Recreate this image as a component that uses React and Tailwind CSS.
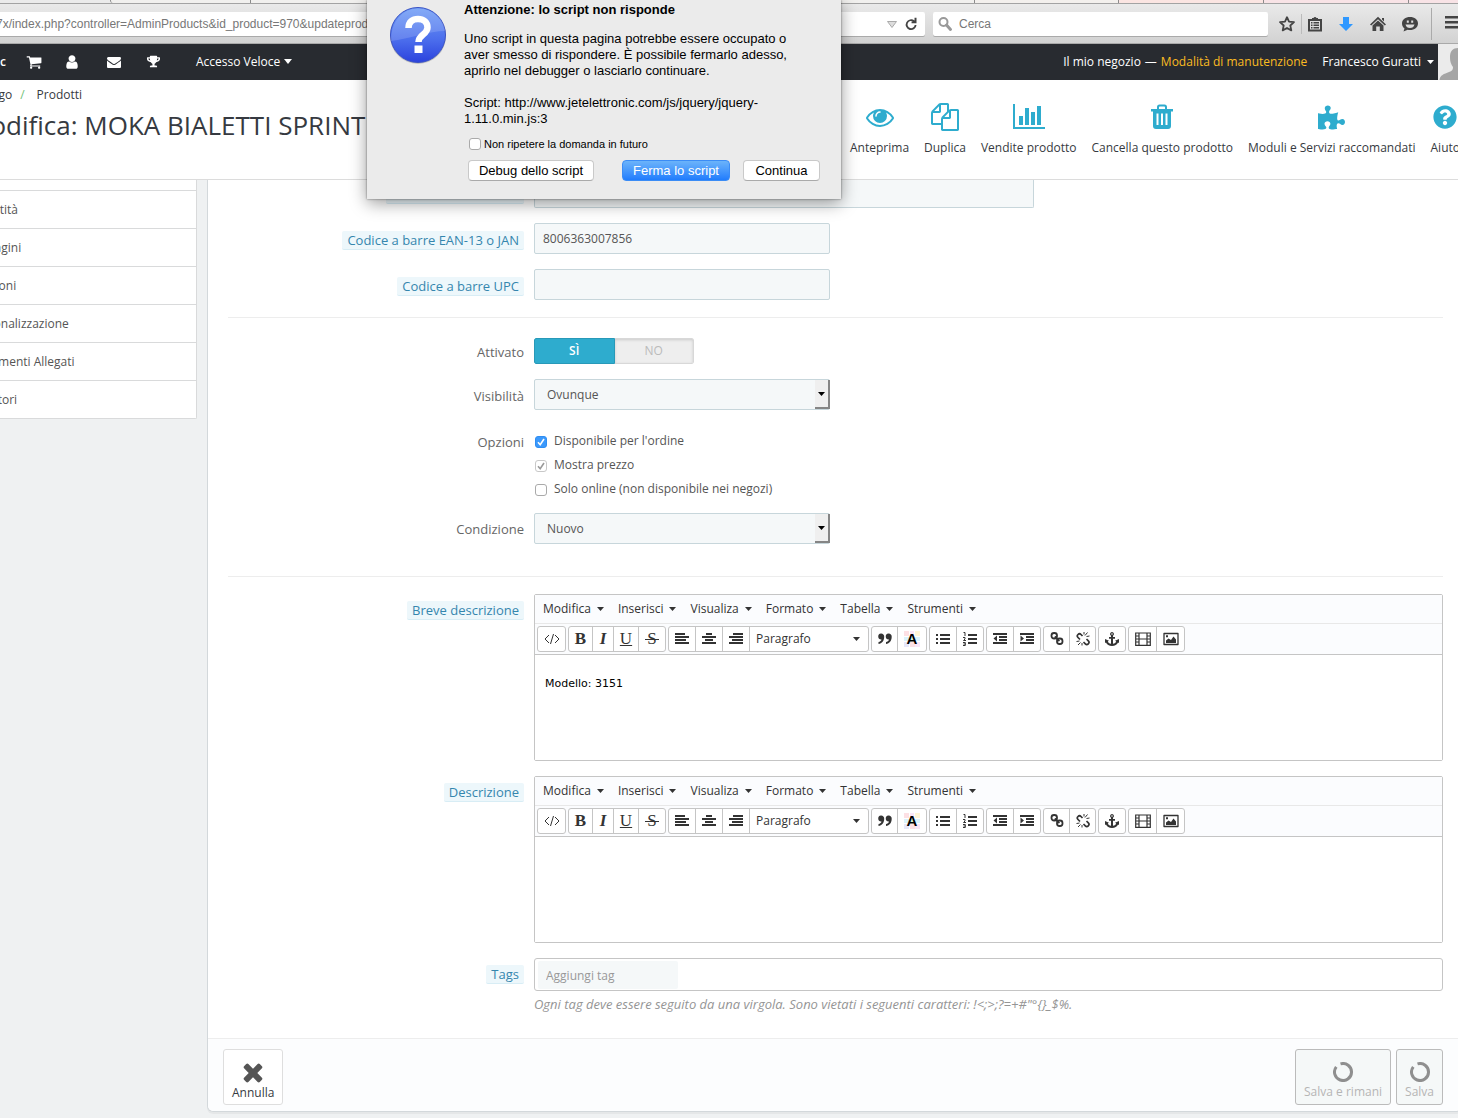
import React from "react";
import { FaTrophy, FaPuzzlePiece, FaQuestionCircle } from "react-icons/fa";

const Glyph = ({ d, box = "0 0 1792 1792", className = "" }) => (
  <svg viewBox={box} className={className} fill="currentColor" aria-hidden="true">
    <path d={d} />
  </svg>
);

const glyphs = {
  cart: "M704 1536q0 52-38 90t-90 38-90-38-38-90 38-90 90-38 90 38 38 90zm896 0q0 52-38 90t-90 38-90-38-38-90 38-90 90-38 90 38 38 90zm128-1088v512q0 24-16.5 42.5t-40.5 21.5l-1044 122q13 60 13 70 0 16-24 64h920q26 0 45 19t19 45-19 45-45 19h-1024q-26 0-45-19t-19-45q0-11 8-31.5t16-36 21.5-40 15.5-29.5l-177-823h-204q-26 0-45-19t-19-45 19-45 45-19h256q16 0 28.5 6.5t19.5 15.5 13 24.5 8 26 5.5 29.5 4.5 26h1201q26 0 45 19t19 45z",
  user: "M1536 1399q0 109-62.5 187t-150.5 78h-854q-88 0-150.5-78t-62.5-187q0-85 8.5-160.5t31.5-152 58.5-131 94-89 134.5-34.5q131 128 313 128t313-128q76 0 134.5 34.5t94 89 58.5 131 31.5 152 8.5 160.5zm-256-887q0 159-112.5 271.5t-271.5 112.5-271.5-112.5-112.5-271.5 112.5-271.5 271.5-112.5 271.5 112.5 112.5 271.5z",
  mail: "M1792 710v794q0 66-47 113t-113 47h-1472q-66 0-113-47t-47-113v-794q44 49 101 87 362 246 497 345 57 42 92.5 65.5t94.500 48 110 24.500h2q51 0 110-24.500t94.500-48 92.500-65.500q170-123 498-345 57-39 100-87zm0-294q0 79-49 151t-122 123q-376 261-468 325-10 7-42.500 30.500t-54 38-52 32.500-57.500 27-50 9h-2q-23 0-50-9t-57.500-27-52-32.500-54-38-42.500-30.500q-91-64-262-182.500t-205-142.500q-62-42-117-115.500t-55-136.500q0-78 41.500-130t118.500-52h1472q65 0 112.500 47t47.500 113z",
  eye: "M1664 960q-152-236-381-353 61 104 61 225 0 185-131.5 316.5t-316.5 131.5-316.5-131.5-131.5-316.5q0-121 61-225-229 117-381 353 133 205 333.5 326.5t434.5 121.5 434.5-121.5 333.5-326.5zm-720-384q0-20-14-34t-34-14q-125 0-214.5 89.5t-89.5 214.5q0 20 14 34t34 14 34-14 14-34q0-86 61-147t147-61q20 0 34-14t14-34zm848 384q0 34-20 69-140 230-376.5 368.5t-499.5 138.5-499.5-139-376.5-368q-20-35-20-69t20-69q140-229 376.5-368t499.5-139 499.5 139 376.5 368q20 35 20 69z",
  copy: "M1696 384q40 0 68 28t28 68v1216q0 40-28 68t-68 28h-960q-40 0-68-28t-28-68v-288h-544q-40 0-68-28t-28-68v-672q0-40 20-88t48-76l408-408q28-28 76-48t88-20h416q40 0 68 28t28 68v328q68-40 128-40h416zm-544 213l-299 299h299v-299zm-640-384l-299 299h299v-299zm196 647l316-316v-416h-384v416q0 40-28 68t-68 28h-416v640h512v-256q0-40 20-88t48-76zm956 804v-1152h-384v416q0 40-28 68t-68 28h-416v640h896z",
  times: "M1490 1322q0 40-28 68l-136 136q-28 28-68 28t-68-28l-294-294-294 294q-28 28-68 28t-68-28l-136-136q-28-28-28-68t28-68l294-294-294-294q-28-28-28-68t28-68l136-136q28-28 68-28t68 28l294 294 294-294q28-28 68-28t68 28l136 136q28 28 28 68t-28 68l-294 294 294 294q28 28 28 68z",
};

const Caret = ({ className = "" }) => (
  <svg viewBox="0 0 7 4" className={`w-[7px] h-1 shrink-0 ${className}`} fill="currentColor" aria-hidden="true">
    <path d="M0 0h7L3.500 4z" />
  </svg>
);

const ChromeIcon = ({ children, label, className = "" }) => (
  <button aria-label={label} className={`shrink-0 ${className}`}>
    <svg viewBox="0 0 16 16" className="w-4 h-4" fill="currentColor">{children}</svg>
  </button>
);

const BrowserChrome = () => (
  <div className="h-11 flex flex-col bg-linear-to-b from-[#ececec] to-[#d2d2d2] border-b border-[#a9a9a9]">
    <div className="h-1 flex border-b border-[#a3a3a3] bg-[#ebebeb]">
      <div className="w-[110px]" />
      <div className="w-[141px] bg-[#f1f0ee] border-r border-l border-[#8b8b8b] rounded-bl-md" />
      <div className="flex-1 bg-[#f1f0ee] border-r border-[#8b8b8b]" />
      <div className="w-[144px] bg-[#f3f0ed] border-r border-[#8b8b8b]" />
      <div className="w-[145px] bg-[#fbe5e2] border-r border-[#8b8b8b]" />
      <div className="w-[145px] bg-[#f8e3e6] border-r border-[#8b8b8b]" />
      <div className="w-[49px] bg-[#f8e3e6]" />
    </div>
    <div className="flex-1 flex items-center pt-px text-[#444]">
      <div className="flex-1 h-6 -ml-1 mr-2 bg-white rounded-r-xs shadow-[0_1px_0_#aaa] flex items-center">
        <input
          aria-label="Indirizzo"
          className="flex-1 text-xs text-[#777] font-['Liberation_Sans',Arial,sans-serif] outline-none"
          defaultValue="7x/index.php?controller=AdminProducts&id_product=970&updateproduct"
        />
        <svg viewBox="0 0 10 7" className="w-[10px] h-[7px] mr-1" fill="#ddd" stroke="#aaa" aria-hidden="true">
          <path d="M.5.5h9L5 6.500z" />
        </svg>
        <ChromeIcon label="Ricarica" className="ml-0.5 mr-1.5">
          <path d="M9 1h5v6H8.500V5.200h1.800A4 4 0 1 0 12 9h2a6 6 0 1 1-2.200-5V1z" transform="scale(.9) translate(1 1)" />
        </ChromeIcon>
      </div>
      <label className="w-[335px] h-6 bg-white rounded-xs shadow-[0_1px_0_#aaa] flex items-center gap-1.5 px-1">
        <svg viewBox="0 0 16 16" className="w-4 h-4" fill="none" stroke="#999" aria-hidden="true">
          <circle cx="6.500" cy="6" r="4" strokeWidth="2" />
          <path d="M9.500 9l4 4.500" strokeWidth="3" strokeLinecap="round" />
        </svg>
        <input
          aria-label="Cerca"
          placeholder="Cerca"
          className="flex-1 text-xs placeholder:text-[#777] font-['Liberation_Sans',Arial,sans-serif] outline-none"
        />
      </label>
      <ChromeIcon label="Preferiti" className="ml-[11px]">
        <path d="M8 1.200l2 4.500 5 .5-3.700 3.300 1 4.900L8 12l-4.300 2.400 1-4.900L1 6.200l5-.5z" fill="none" stroke="currentColor" strokeWidth="1.800" strokeLinejoin="round" />
      </ChromeIcon>
      <div className="w-px h-5 bg-[#bbb] ml-1.5" />
      <ChromeIcon label="Segnalibri" className="ml-[5px]">
        <path d="M5 2h1.500a1.600 1.600 0 0 1 3 0H11v1h4v12.500H1V3h4zM3 5v8.500h10V5z" fillRule="evenodd" />
        <path d="M4 6h1.500v1.500H4zm2.500 0H12v1.500H6.500zM4 8.500h1.500V10H4zm2.500 0H12V10H6.500zM4 11h1.500v1.500H4zm2.500 0H12v1.500H6.500z" />
      </ChromeIcon>
      <ChromeIcon label="Download" className="ml-[15px] text-[#2f98ff]">
        <path d="M5 1h6v7h4l-7 7-7-7h4z" />
      </ChromeIcon>
      <ChromeIcon label="Pagina iniziale" className="ml-4">
        <path d="M8 .8L16 8.400l-1.200 1.200L8 3.200 1.200 9.600 0 8.400zM8 4.500l5.500 5V15H9.800v-4.500H6.200V15H2.500V9.500zM12 2h2v3.500L12 3.600z" />
      </ChromeIcon>
      <ChromeIcon label="Chat" className="ml-4">
        <path d="M8 1c4.500 0 8 2.600 8 6.400S12.500 14 8 14c-.9 0-1.600-.1-2.300-.2L1.500 15.600l1-3.200C.9 11.200 0 9.500 0 7.400 0 3.600 3.500 1 8 1zM4.800 4.400v2.400h2V4.400zm4.400 0v2.400h2V4.400zM3.500 8.400c.5 2.300 2.300 3.600 4.500 3.600s4-1.300 4.500-3.600z" fillRule="evenodd" />
      </ChromeIcon>
      <div className="w-px h-8 bg-[#aaa] ml-[13px]" />
      <div className="w-[13px] ml-[13px] overflow-hidden">
        <ChromeIcon label="Menu">
          <path d="M0 2h16v2.500H0zm0 5h16v2.500H0zm0 5h16v2.500H0z" />
        </ChromeIcon>
      </div>
    </div>
  </div>
);

const TopNav = () => (
  <nav className="h-9 bg-[#282b30] text-white text-xs flex items-center pb-px whitespace-nowrap">
    <span className="w-[26px] font-semibold">c</span>
    <a href="#ordini" aria-label="Ordini"><Glyph d={glyphs.cart} className="w-4 h-4" /></a>
    <a href="#clienti" aria-label="Clienti" className="ml-[22px]"><Glyph d={glyphs.user} className="w-4 h-4" /></a>
    <a href="#messaggi" aria-label="Messaggi" className="ml-[27px]"><Glyph d={glyphs.mail} className="w-[14px] h-4" /></a>
    <a href="#premi" aria-label="Premi" className="ml-[26px]"><FaTrophy className="w-[13px] h-[13px]" /></a>
    <button className="ml-9 flex items-center gap-1">
      Accesso Veloce
      <svg viewBox="0 0 8 5" className="w-2 h-[5px]" fill="currentColor" aria-hidden="true"><path d="M0 0h8L4 5z" /></svg>
    </button>
    <div className="ml-auto flex items-center">
      <a href="#negozio">Il mio negozio</a>
      <span className="mx-1">—</span>
      <a href="#manutenzione" className="text-[#fbbb22]">Modalità di manutenzione</a>
      <button className="ml-[15px] mr-1 flex items-center gap-1.5">
        Francesco Guratti <Caret />
      </button>
    </div>
    <svg viewBox="0 0 20 36" className="w-5 h-9 -mb-px shrink-0" aria-hidden="true">
      <rect width="20" height="36" fill="#ebebeb" />
      <path d="M20 4c-5 0-8 3-8 9 0 5 1 7 3 10 0 3-1 4-4 5-5 2-9 3-9.500 8H20z" fill="#a5a5a5" />
    </svg>
  </nav>
);

const ChartIcon = () => (
  <svg viewBox="0 0 32 26" className="w-8 h-[26px]" fill="currentColor" aria-hidden="true">
    <path d="M0 0h2v23h30v2H0zM6 12h4v9H6zM12 4h4v17h-4zM18 8h4v13h-4zM24 2h4v19h-4z" />
  </svg>
);

const TrashIcon = () => (
  <svg viewBox="0 0 22 26" className="w-[22px] h-[26px]" fill="currentColor" aria-hidden="true">
    <path
      fillRule="evenodd"
      d="M6 5V3q0-2.500 2.500-2.500h5Q16 .5 16 3v2h6v2.500h-2V22q0 3-3 3H5q-3 0-3-3V7.500H0V5zM8 5h6V3.200q0-.7-.7-.7H8.700Q8 2.500 8 3.200zM5.500 9.500V21H7.500V9.500zM10 9.500V21h2V9.500zM14.500 9.500V21h2V9.500z"
    />
  </svg>
);

const actions = [
  { label: "Anteprima", icon: <Glyph d={glyphs.eye} className="w-7 h-7" /> },
  { label: "Duplica", icon: <Glyph d={glyphs.copy} className="w-7 h-7" /> },
  { label: "Vendite prodotto", icon: <ChartIcon /> },
  { label: "Cancella questo prodotto", icon: <TrashIcon /> },
  { label: "Moduli e Servizi raccomandati", icon: <FaPuzzlePiece className="w-[27px] h-[27px]" /> },
  { label: "Aiuto", icon: <FaQuestionCircle className="w-6 h-6" /> },
];

const PageHeader = () => (
  <header className="h-[100px] bg-white border-b border-[#dcdcdc] flex justify-between whitespace-nowrap overflow-hidden">
    <div className="pt-1.5 -ml-[37px]">
      <div className="text-xs leading-[18px] text-[#363a41] flex gap-2">
        <a href="#catalogo">Catalogo</a>
        <span className="text-[#72c279]">/</span>
        <a href="#prodotti" className="ml-1">Prodotti</a>
      </div>
      <h1 className="pl-1 text-[26px] leading-[42px] text-[#363a41]">Modifica: MOKA BIALETTI SPRINT</h1>
    </div>
    <div className="flex gap-[15px] pt-[22px] -mr-0.5">
      {actions.map((a) => (
        <button key={a.label} className="flex flex-col items-center text-xs text-[#363a41]">
          <span className="h-[30px] mb-2 flex items-center text-[#2eacce]">{a.icon}</span>
          {a.label}
        </button>
      ))}
    </div>
  </header>
);

const tabs = ["Quantità", "Immagini", "Funzioni", "Personalizzazione", "Documenti Allegati", "Fornitori"];

const Sidebar = () => (
  <aside className="w-[247px] -ml-[50px] shrink-0 self-start bg-white border-r border-b border-[#d9dadb] rounded-br-xs pt-2.5">
    {tabs.map((t) => (
      <a key={t} href={`#${t}`} className="h-[38px] flex items-center pl-[19px] border-t border-[#d9dadb] text-xs text-[#555]">
        {t}
      </a>
    ))}
  </aside>
);

const Field = ({ label, id, hint, pad = "pt-2", children }) => (
  <div className="grid grid-cols-[296px_1fr] gap-[10px] items-start">
    <div className={`text-right text-[13px] leading-[18px] ${pad}`}>
      <label
        htmlFor={id}
        className={hint ? "inline-block px-[5px] rounded-xs bg-[#edf7fb] border-b border-[#d8edf5] text-[#3586ae]" : "text-[#666]"}
      >
        {label}
      </label>
    </div>
    <div>{children}</div>
  </div>
);

const inputStyle = "block w-[296px] h-[31px] px-2 text-xs text-[#555] bg-[#f5f8f9] border border-[#c7d6db] rounded-xs outline-none";

const SelectBox = ({ id, value }) => (
  <div className="relative w-[296px]">
    <select id={id} className={`${inputStyle} pl-3 pt-px appearance-none`}>
      <option>{value}</option>
    </select>
    <span className="absolute top-px right-0 w-[15px] h-[29px] bg-[#efefef] border-r-2 border-b-2 border-[#858585] flex items-center justify-center text-black pointer-events-none">
      <Caret />
    </span>
  </div>
);

const CheckLine = ({ label, checked, disabled }) => (
  <label className="flex items-center gap-[7px] text-xs text-[#555]">
    <span className="grid w-3 h-3 ml-px mt-0.5">
      <input
        type="checkbox"
        defaultChecked={checked}
        disabled={disabled}
        className="col-start-1 row-start-1 w-3 h-3 appearance-none bg-white border border-[#aaa] rounded-[3px] checked:enabled:bg-[#3b99fc] checked:enabled:border-[#2f8df2] disabled:border-[#c8c8c8]"
      />
      {checked && (
        <svg viewBox="0 0 12 12" className={`col-start-1 row-start-1 w-3 h-3 pointer-events-none ${disabled ? "text-[#999]" : "text-white"}`} fill="none" stroke="currentColor" strokeWidth="1.600">
          <path d="M3 6.200l2.200 2.500L9 3" />
        </svg>
      )}
    </span>
    {label}
  </label>
);

const Tool = ({ w, label, children }) => (
  <button aria-label={label} className={`${w} h-6 flex items-center justify-center`}>{children}</button>
);

const Draw = ({ children, ...rest }) => (
  <svg viewBox="0 0 16 16" className="w-4 h-4" fill="currentColor" aria-hidden="true" {...rest}>{children}</svg>
);

const Group = ({ children }) => (
  <div className="flex bg-white border border-[#c5c5c5] rounded-[3px] divide-x divide-[#c5c5c5]">{children}</div>
);

const menus = ["Modifica", "Inserisci", "Visualiza", "Formato", "Tabella", "Strumenti"];
const serif = "font-['Liberation_Serif',serif] text-[17px] leading-5";

const Editor = ({ id, value }) => (
  <div className="border border-[#c5c5c5] rounded-xs text-[#333]">
    <div className="h-7 flex items-center gap-[14px] px-2 bg-[#fbfcfe] text-xs">
      {menus.map((m) => (
        <button key={m} className="flex items-center gap-1.5">{m} <Caret /></button>
      ))}
    </div>
    <div className="h-8 flex flex-wrap items-center gap-0.5 px-0.5 bg-[#fbfcfe] border-t border-t-[#e8e8e8] border-b border-b-[#c5c5c5]">
      <Group>
        <Tool w="w-[27px]" label="Codice sorgente">
          <Draw fill="none" stroke="currentColor" strokeWidth="1"><path d="M5 4L1 8l4 4M11 4l4 4-4 4M9.500 3l-3 10" /></Draw>
        </Tool>
      </Group>
      <Group>
        <Tool w="w-6" label="Grassetto"><b className={serif}>B</b></Tool>
        <Tool w="w-[21px]" label="Corsivo"><i className={`${serif} font-bold`}>I</i></Tool>
        <Tool w="w-[25px]" label="Sottolineato"><u className={serif}>U</u></Tool>
        <Tool w="w-[26px]" label="Barrato">
          <span className="grid place-items-center">
            <span className={`${serif} col-start-1 row-start-1`}>S</span>
            <span className="col-start-1 row-start-1 w-[14px] h-px bg-[#333]" />
          </span>
        </Tool>
      </Group>
      <Group>
        <Tool w="w-[27px]" label="Allinea a sinistra"><Draw><path d="M1 2h10v2H1zM1 5h14v2H1zM1 8h11v2H1zM1 11h14v2H1z" /></Draw></Tool>
        <Tool w="w-[27px]" label="Centra"><Draw><path d="M5 2h6v2H5zM1 5h14v2H1zM4 8h8v2H4zM1 11h14v2H1z" /></Draw></Tool>
        <Tool w="w-[27px]" label="Allinea a destra"><Draw><path d="M5 2h10v2H5zM1 5h14v2H1zM4 8h11v2H4zM1 11h14v2H1z" /></Draw></Tool>
        <button className="w-[118px] h-6 flex items-center justify-between pl-1.5 pr-2 text-xs">Paragrafo <Caret /></button>
      </Group>
      <Group>
        <Tool w="w-[26px]" label="Citazione">
          <Draw><path d="M4 2.500a3 3 0 0 1 3.200 3.300C7.200 10 5 12.500 1.500 13v-2c1.700-.3 2.700-1.200 3-2.500A3 3 0 1 1 4 2.500zM11.500 2.500a3 3 0 0 1 3.200 3.300c0 4.200-2.200 6.700-5.700 7.200v-2c1.700-.3 2.700-1.200 3-2.500a3 3 0 1 1-.5-6z" /></Draw>
        </Tool>
        <Tool w="w-7" label="Colore testo">
          <span className="grid place-items-center">
            <svg viewBox="0 0 16 16" className="col-start-1 row-start-1 w-4 h-4" aria-hidden="true">
              <path d="M0 0h5v5H0zM6 11h5v5H6z" fill="#fde0e4" />
              <path d="M6 0h4v5H6zM11 11h5v5h-5z" fill="#f9e6f7" />
              <path d="M11 0h5v5h-5z" fill="#fff6d8" />
              <path d="M0 6h5v4H0zM11 6h5v4h-5z" fill="#dbf3fc" />
              <path d="M0 11h5v5H0z" fill="#e6e8fb" />
              <path d="M6 6h4v4H6z" fill="#d8f6df" />
            </svg>
            <span className="col-start-1 row-start-1 font-['Liberation_Sans',Arial,sans-serif] font-bold text-[15px] leading-4 text-black">A</span>
          </span>
        </Tool>
      </Group>
      <Group>
        <Tool w="w-[27px]" label="Elenco puntato"><Draw><path d="M5 3h10v2H5zM5 7h10v2H5zM5 11h10v2H5zM1 3h2v2H1zM1 7h2v2H1zM1 11h2v2H1z" /></Draw></Tool>
        <Tool w="w-[26px]" label="Elenco numerato">
          <Draw>
            <path d="M6 3h9v2H6zM6 7h9v2H6zM6 11h9v2H6z" />
            <path d="M1.500 1.500H3V5M1 6.500h2V8L1.500 9.500H4M1 11.500h2.300v3H1M1.500 13h1.800" fill="none" stroke="currentColor" />
          </Draw>
        </Tool>
      </Group>
      <Group>
        <Tool w="w-[27px]" label="Riduci rientro"><Draw><path d="M1 2h14v2H1zM7 5h8v2H7zM7 8h8v2H7zM1 11h14v2H1zM5 4.500v6L1.500 7.500z" /></Draw></Tool>
        <Tool w="w-[26px]" label="Aumenta rientro"><Draw><path d="M1 2h14v2H1zM7 5h8v2H7zM7 8h8v2H7zM1 11h14v2H1zM1.500 4.500v6L5 7.500z" /></Draw></Tool>
      </Group>
      <Group>
        <Tool w="w-[26px]" label="Inserisci link">
          <Draw fill="none" stroke="currentColor" strokeWidth="1.800">
            <rect x="2.500" y="2" width="5.500" height="5.500" rx="2.500" />
            <rect x="8" y="7.500" width="5.500" height="5.500" rx="2.500" />
            <path d="M5.800 5.500l4.600 4.600" />
          </Draw>
        </Tool>
        <Tool w="w-[25px]" label="Rimuovi link">
          <Draw fill="none" stroke="currentColor" strokeWidth="1.700">
            <path d="M7.500 5L6 3.500a2 2 0 0 0-3 3L5 8.500M8.500 11l1.800 1.800a2 2 0 0 0 3-3L11.500 8" />
            <path d="M11.500 5.500l3-.5M10 4.500l2.500-3M9 3.500V1M4.500 10L1.500 10.500M5.500 11.500L3 14M7 12v2.500" strokeWidth="1" />
          </Draw>
        </Tool>
      </Group>
      <Group>
        <Tool w="w-[26px]" label="Ancora">
          <Draw>
            <path d="M8 1a2 2 0 0 1 1 3.700V6h2v1.800H9v5c1.700-.3 2.800-1.200 3.200-2.300L11 9.800 15 8v4l-1-.6C13 13.400 11 15 8 15s-5-1.600-6-3.600L1 12V8l4 1.800-1.200.7c.4 1.100 1.500 2 3.200 2.300v-5H5V6h2V4.700A2 2 0 0 1 8 1zm0 1.200a.8.8 0 1 0 0 1.600.8.8 0 0 0 0-1.600z" fillRule="evenodd" />
          </Draw>
        </Tool>
      </Group>
      <Group>
        <Tool w="w-7" label="Inserisci video"><Draw fill="none" stroke="currentColor" strokeWidth="1.200"><path d="M.7 2h14.600v12.300H.7zM4 2v12M12 2v12M4 8h8M1 5h3M1 8h3M1 11h3M12 5h3M12 8h3M12 11h3" /></Draw></Tool>
        <Tool w="w-[27px]" label="Inserisci immagine">
          <Draw>
            <path d="M1 2.500h14v11H1z" fill="none" stroke="currentColor" strokeWidth="1.300" strokeLinejoin="round" />
            <path d="M3 12V9.500L5.500 7.500 8 9l2.500-3.500L13 8.500V12zM3 4.200h2v2H3z" />
          </Draw>
        </Tool>
      </Group>
    </div>
    <textarea
      id={id}
      defaultValue={value}
      className="block w-full h-[105px] px-[10px] py-[21px] resize-none outline-none bg-white text-[11px] leading-4 text-black font-['DejaVu_Sans',Verdana,sans-serif]"
    />
  </div>
);

const Spinner = () => (
  <svg viewBox="0 0 20 20" className="w-5 h-5" fill="none" stroke="#8f8f8f" strokeWidth="3" aria-hidden="true">
    <path d="M7.500 1.900A8.500 8.500 0 1 1 3.300 4.800" />
  </svg>
);

const footerButton = "h-14 px-2 pt-2 flex flex-col items-center justify-center gap-0.5 border rounded-[3px] text-xs";

const ProductPanel = () => (
  <section className="flex-1 min-w-0 ml-[10px] -mr-1 bg-white border border-t-0 border-[#d3d8db] rounded-b-md shadow-[0_2px_0_rgba(0,0,0,0.04)]">
    <div className="pl-5 pr-[18px]">
      <div className="grid grid-cols-[296px_1fr] gap-[10px] items-start">
        <div className="w-[138px] h-6 ml-auto rounded-b-xs bg-[#edf7fb] border-b border-[#d8edf5]" />
        <input aria-label="Codice di riferimento" className="w-[500px] h-7 bg-[#f5f8f9] border border-t-0 border-[#c7d6db] rounded-b-xs" />
      </div>
      <div className="mt-[15px] space-y-[15px]">
        <Field hint id="ean" label="Codice a barre EAN-13 o JAN">
          <input id="ean" className={inputStyle} defaultValue="8006363007856" />
        </Field>
        <Field hint id="upc" label="Codice a barre UPC">
          <input id="upc" className={inputStyle} />
        </Field>
      </div>
      <hr className="mt-[17px] mb-5 border-[#ededed]" />
      <div className="space-y-[15px]">
        <Field label="Attivato" pad="pt-[5px]">
          <div className="w-40 h-[26px] flex text-xs rounded-xs overflow-hidden">
            <button className="flex-1 bg-[#2eacce] border border-[#2899b8] rounded-l-xs text-white font-semibold">SÌ</button>
            <button className="flex-1 bg-[#eee] border border-l-0 border-[#d8d8d8] rounded-r-xs text-[#bbb] shadow-[inset_0_1px_3px_rgba(0,0,0,0.15)]">NO</button>
          </div>
        </Field>
        <Field id="visibility" label="Visibilità"><SelectBox id="visibility" value="Ovunque" /></Field>
        <Field label="Opzioni">
          <div className="pt-2 pb-px space-y-2">
            <CheckLine label="Disponibile per l'ordine" checked />
            <CheckLine label="Mostra prezzo" checked disabled />
            <CheckLine label="Solo online (non disponibile nei negozi)" />
          </div>
        </Field>
        <Field id="condition" label="Condizione" pad="pt-[7px]"><SelectBox id="condition" value="Nuovo" /></Field>
      </div>
      <hr className="mt-8 mb-[17px] border-[#ededed]" />
      <div className="space-y-[15px]">
        <Field hint id="short" label="Breve descrizione" pad="pt-[7px]"><Editor id="short" value="Modello: 3151" /></Field>
        <Field hint id="long" label="Descrizione" pad="pt-[7px]"><Editor id="long" /></Field>
        <Field hint id="tags" label="Tags" pad="pt-[7px]">
          <div className="h-[33px] p-[3px] pt-0.5 border border-[#c5c5c5] rounded-[3px]">
            <input
              id="tags"
              placeholder="Aggiungi tag"
              className="block w-[140px] h-7 px-2 text-xs bg-[#f5f8f9] rounded-xs placeholder:text-[#999] outline-none"
            />
          </div>
          <p className="mt-[5px] text-[13px] leading-[17px] italic text-[#959595]">
            Ogni tag deve essere seguito da una virgola. Sono vietati i seguenti caratteri: !&lt;;&gt;;?=+#"°{"{}"}_$%.
          </p>
        </Field>
      </div>
    </div>
    <footer className="mt-[25px] h-[73px] flex gap-[5px] pt-[10px] pl-[15px] pr-[18px] bg-[#fcfdfe] border-t border-[#ededed] rounded-b-md">
      <button className={`${footerButton} mr-auto bg-white border-[#dedede] text-[#363a41]`}>
        <Glyph d={glyphs.times} box="200 200 1392 1392" className="w-[22px] h-[22px] text-[#555]" />
        Annulla
      </button>
      <button disabled className={`${footerButton} bg-[#f5f8f8] border-[#bbb] text-[#b5b5b5]`}><Spinner /> Salva e rimani</button>
      <button disabled className={`${footerButton} bg-[#f5f8f8] border-[#bbb] text-[#b5b5b5]`}><Spinner /> Salva</button>
    </footer>
  </section>
);

const macButton = "h-[21px] rounded-[4px] bg-white border border-[#c9c9c9] border-b-[#aaa] flex items-center justify-center";

const ScriptDialog = () => (
  <div
    role="dialog"
    aria-labelledby="dialog-title"
    className="absolute top-0 left-[367px] w-[474px] h-[199px] flex pl-[22px] bg-[#ebebeb] text-black text-[13px] leading-4 font-['Liberation_Sans',Arial,sans-serif] shadow-[0_4px_16px_rgba(0,0,0,0.4),0_0_2px_rgba(0,0,0,0.5)]"
  >
    <svg viewBox="0 0 58 60" className="w-[58px] h-[60px] mt-1.5 shrink-0" aria-hidden="true">
      <defs>
        <linearGradient id="ball" x1="0" y1="0" x2="0" y2="1">
          <stop offset="0" stopColor="#6f9df6" />
          <stop offset="0.600" stopColor="#4a6cec" />
          <stop offset="1" stopColor="#2b42dd" />
        </linearGradient>
      </defs>
      <circle cx="29" cy="30" r="28" fill="#999" opacity="0.500" />
      <circle cx="29" cy="29" r="27.500" fill="url(#ball)" stroke="#3b53c4" />
      <path d="M2 35C2 15 14 2.500 29 2.500S55 14 56 25C40 25 20 33 2 35z" fill="#fff" opacity="0.150" />
      <path d="M19.500 22c0-6 4-9 9.500-9s9.500 3 9.500 8.500c0 7-9 7-9 14.500" fill="none" stroke="#fff" strokeWidth="6.500" />
      <path d="M25.500 39.500h8V47h-8z" fill="#fff" />
    </svg>
    <div className="ml-[17px] mt-0.5">
      <h2 id="dialog-title" className="font-bold">Attenzione: lo script non risponde</h2>
      <p className="mt-[13px]">
        Uno script in questa pagina potrebbe essere occupato o<br />
        aver smesso di rispondere. È possibile fermarlo adesso,<br />
        aprirlo nel debugger o lasciarlo continuare.
      </p>
      <p className="mt-4">
        Script: http://www.jetelettronic.com/js/jquery/jquery-<br />
        1.11.0.min.js:3
      </p>
      <label className="mt-[9px] ml-[5px] flex items-center gap-[3px] text-[11px]">
        <input type="checkbox" className="w-3 h-3 appearance-none bg-white border border-[#aaa] rounded-[3px]" />
        Non ripetere la domanda in futuro
      </label>
      <div className="mt-2 ml-1 flex">
        <button className={`${macButton} w-[126px]`}>Debug dello script</button>
        <button className="w-[108px] h-[21px] ml-7 rounded-[4px] bg-linear-to-b from-[#6bb3fa] to-[#1f7cfd] border border-[#3b8cf5] text-white flex items-center justify-center">
          Ferma lo script
        </button>
        <button className={`${macButton} w-[77px] ml-[13px]`}>Continua</button>
      </div>
    </div>
  </div>
);

const App = () => (
  <div className="relative min-h-screen overflow-hidden bg-[#eff1f2] font-['Open_Sans',sans-serif]">
    <BrowserChrome />
    <TopNav />
    <PageHeader />
    <main className="flex pb-1.5">
      <Sidebar />
      <ProductPanel />
    </main>
    <ScriptDialog />
  </div>
);

export default App;
